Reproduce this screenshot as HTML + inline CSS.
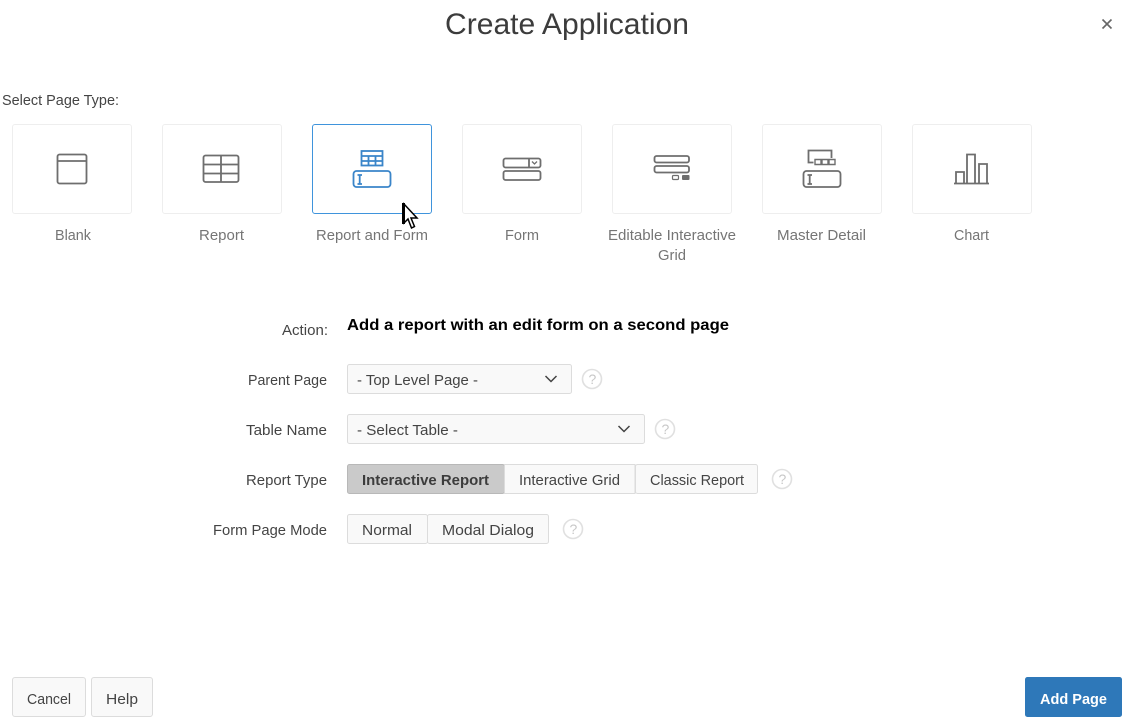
<!DOCTYPE html>
<html><head><meta charset="utf-8"><title>Create Application</title>
<style>
html,body{margin:0;padding:0;background:#fff;width:1136px;height:727px;overflow:hidden}
svg{display:block}
text{font-family:"Liberation Sans",sans-serif;font-size:15px;fill:#444}
.t{fill:#757575}
.i{fill:none;stroke:#6e6e6e;stroke-width:1.8}
.b{fill:none;stroke:#3a85c9;stroke-width:1.8}
.card{fill:#fff;stroke:#eee}
.btn{fill:#f9f9f9;stroke:#dcdcdc}
.h{fill:#fff;stroke:#e0e0e0;stroke-width:1.6}
.q{fill:#c8c8c8;font-size:14px}
</style></head><body>
<svg width="1136" height="727" viewBox="0 0 1136 727" xmlns="http://www.w3.org/2000/svg">
<text x="445" y="34" textLength="244" lengthAdjust="spacingAndGlyphs" style="font-size:30px;fill:#3c3c3c">Create Application</text>
<path d="M1102.500 19.500l9 9m0-9l-9 9" fill="none" stroke="#666" stroke-width="1.600"/>
<text x="2" y="105" textLength="117" lengthAdjust="spacingAndGlyphs" style="font-size:14.500px">Select Page Type:</text>

<rect class="card" x="12.500" y="124.500" width="119" height="89" rx="2.500"/>
<rect class="card" x="162.500" y="124.500" width="119" height="89" rx="2.500"/>
<rect x="312.500" y="124.500" width="119" height="89" rx="2.500" fill="#fff" stroke="#3f94dc"/>
<rect class="card" x="462.500" y="124.500" width="119" height="89" rx="2.500"/>
<rect class="card" x="612.500" y="124.500" width="119" height="89" rx="2.500"/>
<rect class="card" x="762.500" y="124.500" width="119" height="89" rx="2.500"/>
<rect class="card" x="912.500" y="124.500" width="119" height="89" rx="2.500"/>

<!-- Blank -->
<rect class="i" x="57.500" y="154.500" width="29" height="29" rx="2"/>
<path class="i" d="M57.500 161h29"/>
<!-- Report -->
<rect class="i" x="203.500" y="155.500" width="35" height="26.500" rx="2"/>
<path class="i" d="M221 155.500v26.500M203.500 164.500h35M203.500 173.500h35"/>
<!-- Report and Form -->
<rect class="b" x="361.500" y="151" width="21" height="14.500"/>
<path class="b" d="M361.500 156h21M361.500 161h21M368.500 156v9.500M375.500 156v9.500"/>
<rect class="b" x="353.500" y="171" width="37" height="16" rx="3"/>
<path class="b" d="M357.500 175h4.500M357.500 184h4.500M359.700 175v9"/>
<!-- Form -->
<rect class="i" x="503.500" y="158.500" width="37" height="9" rx="2"/>
<path class="i" d="M529 158.500v9"/>
<path d="M532 161.500l2.500 2.500 2.500-2.500" fill="none" stroke="#6e6e6e" stroke-width="1.300"/>
<rect class="i" x="503.500" y="171" width="37" height="9" rx="2"/>
<!-- Editable Interactive Grid -->
<rect class="i" x="654.500" y="156" width="34.500" height="6.500" rx="2"/>
<rect class="i" x="654.500" y="166" width="34.500" height="6.500" rx="2"/>
<rect class="i" x="672.500" y="175.500" width="6" height="4" rx="1" style="stroke-width:1.200"/>
<rect x="682" y="175" width="7.500" height="5" rx="1" fill="#6e6e6e"/>
<!-- Master Detail -->
<path class="i" d="M831.500 158v-7.500h-23v12h5"/>
<path class="i" style="stroke-width:1.400" d="M815 159.500h6v5h-6zM822 159.500h6v5h-6zM829 159.500h6v5h-6z"/>
<rect class="i" x="803.500" y="171" width="37" height="16" rx="3"/>
<path class="i" d="M807.500 175h4.500M807.500 184h4.500M809.700 175v9"/>
<!-- Chart -->
<path class="i" d="M954 183.500h35M956 183v-11h8v11M967 183v-28.500h8v28.500M979 183v-19h8v19"/>

<text class="t" x="55" y="240" textLength="36" lengthAdjust="spacingAndGlyphs">Blank</text>
<text class="t" x="199" y="240" textLength="45" lengthAdjust="spacingAndGlyphs">Report</text>
<text class="t" x="316" y="240" textLength="112" lengthAdjust="spacingAndGlyphs">Report and Form</text>
<text class="t" x="505" y="240" textLength="34" lengthAdjust="spacingAndGlyphs">Form</text>
<text class="t" x="608" y="240" textLength="128" lengthAdjust="spacingAndGlyphs">Editable Interactive</text>
<text class="t" x="658" y="260" textLength="28" lengthAdjust="spacingAndGlyphs">Grid</text>
<text class="t" x="777" y="240" textLength="89" lengthAdjust="spacingAndGlyphs">Master Detail</text>
<text class="t" x="954" y="240" textLength="35" lengthAdjust="spacingAndGlyphs">Chart</text>

<!-- Cursor -->
<path d="M404 204v19l4-4 3.500 9 3-1.500-3.500-8.500h6z" fill="#fff" stroke="#000" stroke-width="1.500"/>
<path d="M403.500 203v21" stroke="#000" stroke-width="3"/>

<text x="282" y="335" textLength="46" lengthAdjust="spacingAndGlyphs">Action:</text>
<text x="347" y="330" textLength="382" lengthAdjust="spacingAndGlyphs" style="font-size:16px;font-weight:bold;fill:#000">Add a report with an edit form on a second page</text>

<text x="248" y="385" textLength="79" lengthAdjust="spacingAndGlyphs">Parent Page</text>
<rect class="btn" x="347.500" y="364.500" width="224" height="29" rx="2"/>
<text x="357" y="385" textLength="121" lengthAdjust="spacingAndGlyphs">- Top Level Page -</text>
<path d="M545.500 376l5.500 5.500 5.500-5.500" fill="none" stroke="#444" stroke-width="1.500"/>
<circle class="h" cx="592" cy="379" r="9.500"/><text class="q" x="588.500" y="384">?</text>

<text x="246" y="435" textLength="81" lengthAdjust="spacingAndGlyphs">Table Name</text>
<rect class="btn" x="347.500" y="414.500" width="297" height="29" rx="2"/>
<text x="357" y="435" textLength="101" lengthAdjust="spacingAndGlyphs">- Select Table -</text>
<path d="M618.500 426l5.500 5.500 5.500-5.500" fill="none" stroke="#444" stroke-width="1.500"/>
<circle class="h" cx="665" cy="429" r="9.500"/><text class="q" x="661.500" y="434">?</text>

<text x="246" y="485" textLength="81" lengthAdjust="spacingAndGlyphs">Report Type</text>
<rect x="347.500" y="464.500" width="157" height="29" rx="2" fill="#cacaca" stroke="#b8b8b8"/>
<rect class="btn" x="504.500" y="464.500" width="130.500" height="29"/>
<rect class="btn" x="635.500" y="464.500" width="122" height="29" rx="2"/>
<text x="362" y="485" textLength="127" lengthAdjust="spacingAndGlyphs" style="font-weight:bold;fill:#3c3c3c">Interactive Report</text>
<text x="519" y="485" textLength="101" lengthAdjust="spacingAndGlyphs">Interactive Grid</text>
<text x="650" y="485" textLength="94" lengthAdjust="spacingAndGlyphs">Classic Report</text>
<circle class="h" cx="782" cy="479" r="9.500"/><text class="q" x="778.500" y="484">?</text>

<text x="213" y="535" textLength="114" lengthAdjust="spacingAndGlyphs">Form Page Mode</text>
<rect class="btn" x="347.500" y="514.500" width="80" height="29" rx="2"/>
<rect class="btn" x="427.500" y="514.500" width="121" height="29" rx="2"/>
<text x="362" y="535" textLength="50" lengthAdjust="spacingAndGlyphs">Normal</text>
<text x="442" y="535" textLength="92" lengthAdjust="spacingAndGlyphs">Modal Dialog</text>
<circle class="h" cx="573" cy="529" r="9.500"/><text class="q" x="569.500" y="534">?</text>

<rect class="btn" x="12.500" y="677.500" width="73" height="39" rx="2.500"/>
<text x="27" y="704" textLength="44" lengthAdjust="spacingAndGlyphs">Cancel</text>
<rect class="btn" x="91.500" y="677.500" width="61" height="39" rx="2.500"/>
<text x="106" y="704" textLength="32" lengthAdjust="spacingAndGlyphs">Help</text>
<rect x="1025" y="677" width="97" height="40" rx="2.500" fill="#2e78b9"/>
<text x="1040" y="704" textLength="67" lengthAdjust="spacingAndGlyphs" style="font-weight:bold;fill:#fff">Add Page</text>
</svg>
</body></html>
